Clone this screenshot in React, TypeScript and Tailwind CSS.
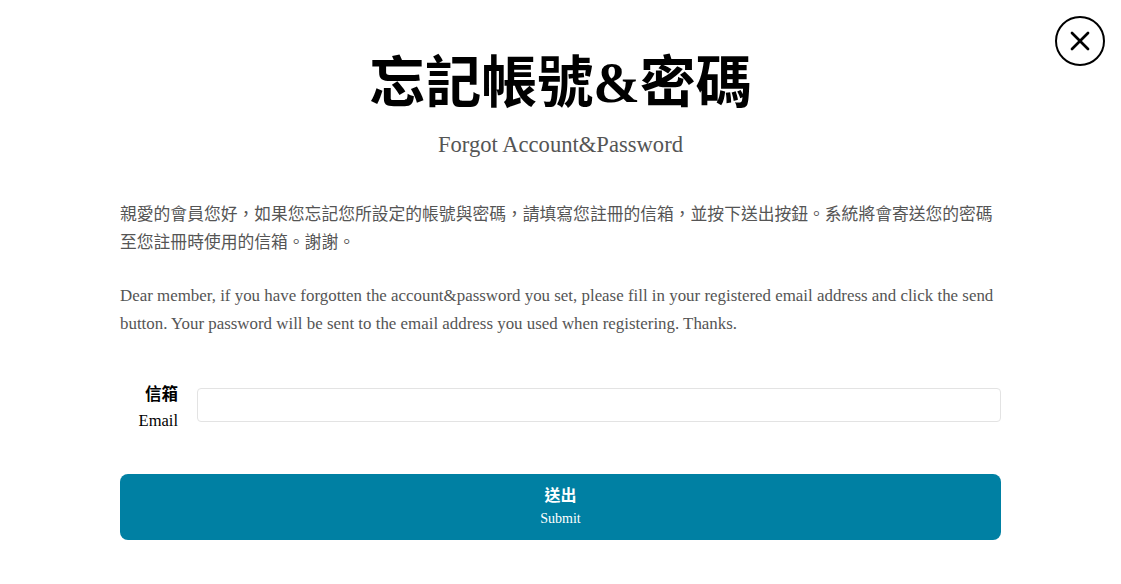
import { X } from "lucide-react";

const serif = "font-['Liberation_Serif','Times_New_Roman','Noto_Sans_CJK_TC',serif]";

export default function App() {
  return (
    <div className={`relative min-h-[584px] w-full bg-white ${serif}`}>
      <button className="absolute right-[16px] top-[16px] flex h-[50px] w-[50px] items-center justify-center rounded-full border-2 border-black bg-white">
        <X size={32} strokeWidth={2} className="text-black" />
      </button>

      <div className="mx-auto w-[881px] pt-[48px]">
        <h1 className="text-center text-[56px] font-bold leading-[70px] text-black">
          忘記帳號&amp;密碼
        </h1>
        <p className="mt-[12px] text-center text-[22.6px] leading-[30px] text-[#555]">
          Forgot Account&amp;Password
        </p>

        <div className="mt-[41px] text-[16.8px] leading-[28px] text-[#555]">
          <p>
            親愛的會員您好，如果您忘記您所設定的帳號與密碼，請填寫您註冊的信箱，並按下送出按鈕。系統將會寄送您的密碼至您註冊時使用的信箱。謝謝。
          </p>
          <p className="mt-[25px] text-[16.9px]">
            Dear member, if you have forgotten the account&amp;password you set, please fill in your registered email address and click the send button. Your password will be sent to the email address you used when registering. Thanks.
          </p>
        </div>

        <div className="mt-[41px] flex items-center">
          <label className="w-[58px] translate-y-[3px] text-right leading-[26px] text-black">
            <div className="text-[16.5px] font-bold">信箱</div>
            <div className="text-[16.5px]">Email</div>
          </label>
          <input
            type="email"
            className="ml-[19px] h-[34px] flex-1 rounded-[4px] border border-[#e3e3e3] px-3 text-[16px] outline-none"
          />
        </div>

        <button className="mt-[43px] flex h-[66px] w-full flex-col items-center justify-center rounded-[8px] bg-[#0080a3] text-white">
          <span className="text-[16px] font-bold leading-[24px]">送出</span>
          <span className="text-[14px] leading-[22px]">Submit</span>
        </button>
      </div>
    </div>
  );
}
